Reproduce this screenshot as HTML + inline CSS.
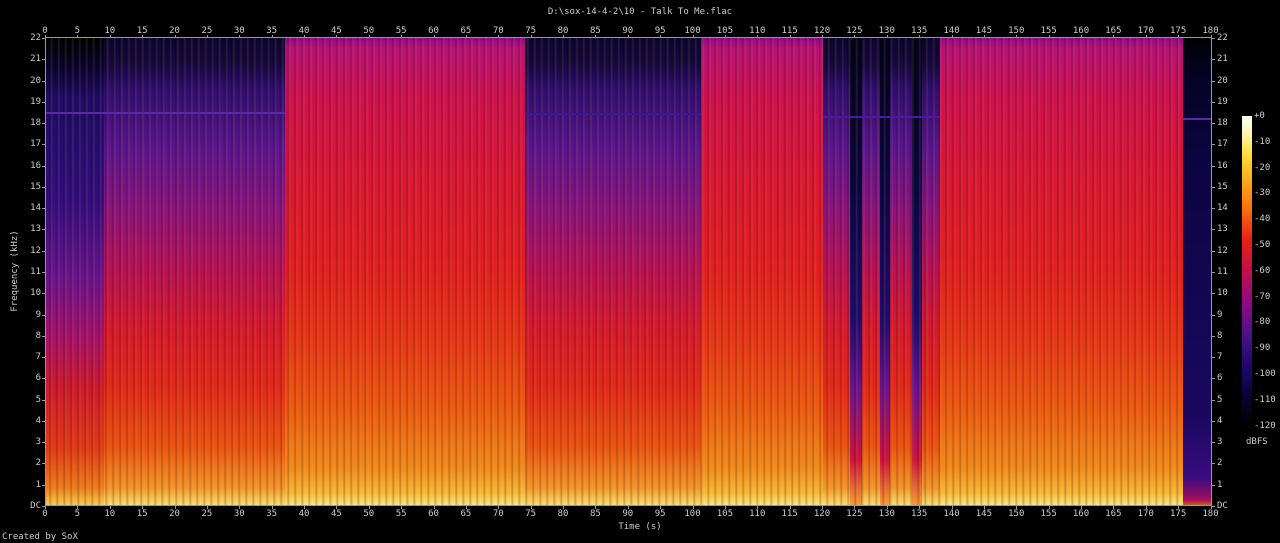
<!DOCTYPE html>
<html><head><style>
html,body{margin:0;padding:0;background:#000;width:1280px;height:543px;overflow:hidden;font-family:"DejaVu Sans Mono","Liberation Mono",monospace;color:#ccc;font-size:9px}
.a{position:absolute;white-space:nowrap}
.seg{position:absolute;top:38px;height:468px}
.loud{background:linear-gradient(to bottom,#8a0a8a 0px,#b8107a 10px,#d01050 60px,#dc1634 140px,#e41e22 230px,#ea3418 300px,#f05a12 370px,#f48a1c 430px,#fab838 455px,#fde880 468px)}
.med{background:linear-gradient(to bottom,#0a0430 0px,#14063e 25px,#2e0c70 50px,#5a1490 110px,#8a1280 170px,#b81058 230px,#d8182e 290px,#e4281a 350px,#ee5412 410px,#f6962a 450px,#fde070 468px)}
.quiet{background:linear-gradient(to bottom,#000 0px,#060228 25px,#1e0a68 60px,#300c80 160px,#6a1290 240px,#a8106c 300px,#d0182e 350px,#e43818 410px,#f07c1c 450px,#fbd050 468px)}
.gap{background:linear-gradient(#02011a,#0a0440 30%,#1e0a70 60%,#6a1290 75%,#d01040 90%,#f8a030)}
.stripe{position:absolute;top:38px;height:468px;background:repeating-linear-gradient(to right,rgba(0,0,0,0) 0px,rgba(0,0,0,0) 3px,rgba(0,0,0,.25) 4px,rgba(255,200,80,.14) 6px,rgba(0,0,0,0) 7px)}
.lbl{position:absolute;font-size:9px;line-height:10px}
</style></head><body>
<div class="a" style="left:0;top:7px;width:1280px;text-align:center">D:\sox-14-4-2\10 - Talk To Me.flac</div>
<div id="plot">
<div class="seg quiet" style="left:46px;width:58px"></div>
<div class="seg med" style="left:104px;width:181px"></div>
<div class="seg loud" style="left:285px;width:240px"></div>
<div class="seg med" style="left:525px;width:176px"></div>
<div class="seg loud" style="left:701px;width:122px"></div>
<div class="seg med" style="left:823px;width:117px"></div>
<div class="seg gap" style="left:850px;width:12px"></div>
<div class="seg gap" style="left:880px;width:10px"></div>
<div class="seg gap" style="left:912px;width:10px"></div>
<div class="seg loud" style="left:940px;width:243px"></div>
<div class="seg" style="left:1183px;width:29px;background:linear-gradient(to bottom,#000 0px,#040220 30px,#0c0440 120px,#1a0860 380px,#3a0c80 440px,#a01060 462px,#f06010 468px)"></div>
<div class="stripe" style="left:46px;width:1137px"></div>
<div class="a" style="left:46px;top:112px;width:239px;height:2px;background:#5a2aa0"></div>
<div class="a" style="left:525px;top:113px;width:176px;height:2px;background:#3a1a8a"></div>
<div class="a" style="left:823px;top:116px;width:117px;height:2px;background:#4a1a9a"></div>
<div class="a" style="left:1183px;top:118px;width:29px;height:2px;background:#5a2aa0"></div>
</div>
<div class="a" style="left:45px;top:37px;width:1167px;height:469px;border:1px solid #999;box-sizing:border-box"></div>
<div class="a" style="left:1242px;top:116px;width:10px;height:310px;background:linear-gradient(to bottom,#fff 0%,#fff8c0 5%,#fde040 12%,#fbb020 20%,#f87010 30%,#e82010 40%,#c0104a 50%,#900a80 60%,#50108a 70%,#200870 80%,#08033a 90%,#000 100%)"></div>
<div id="t"></div>
<div class="a" style="left:2px;top:532px">Created by SoX</div>
<div class="a" style="left:0;top:522px;width:1280px;text-align:center">Time (s)</div>
<div class="a" style="left:-30px;top:266px;transform:rotate(-90deg);width:90px;text-align:center">Frequency (kHz)</div>
<div class="a" style="left:1246px;top:437px">dBFS</div>
<script>
var t=document.getElementById('t'),h='';
for(var f=0;f<=22;f++){var y=506-f*21.27;var s=f==0?'DC':f;
h+='<div class="lbl" style="left:0;width:41px;text-align:right;top:'+(y-5)+'px">'+s+'</div>';
h+='<div class="lbl" style="left:1217px;top:'+(y-5)+'px">'+s+'</div>';
h+='<div class="a" style="left:42px;top:'+y+'px;width:3px;height:1px;background:#999"></div>';
h+='<div class="a" style="left:1212px;top:'+y+'px;width:3px;height:1px;background:#999"></div>';}
for(var s2=0;s2<=180;s2+=5){var x=45+s2*6.475;
h+='<div class="lbl" style="left:'+(x-15)+'px;width:30px;text-align:center;top:26px">'+s2+'</div>';
h+='<div class="lbl" style="left:'+(x-15)+'px;width:30px;text-align:center;top:509px">'+s2+'</div>';
h+='<div class="a" style="left:'+x+'px;top:35px;width:1px;height:3px;background:#999"></div>';
h+='<div class="a" style="left:'+x+'px;top:506px;width:1px;height:3px;background:#999"></div>';}
for(var d=0;d<=12;d++){var y2=116+d*25.8;
h+='<div class="lbl" style="left:1254px;top:'+(y2-5)+'px">'+(d==0?'+0':'-'+d*10)+'</div>';}
t.innerHTML=h;
</script>
</body></html>
